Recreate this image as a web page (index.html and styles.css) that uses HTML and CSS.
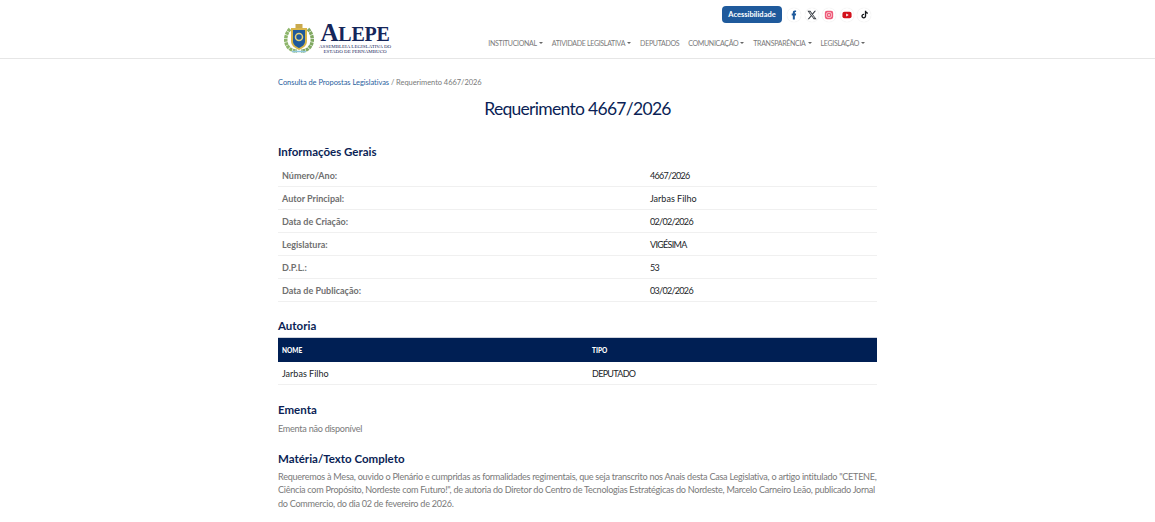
FILE: index.html
```html
<!DOCTYPE html>
<html lang="pt-BR">
<head>
    <meta charset="UTF-8">
    <title>Requerimento 4667/2026</title>
    <link rel="stylesheet" href="styles.css">
</head>
<body>
    <header class="site-header">
        <div class="container header-inner">
            <a class="logo" href="#">
                <svg class="crest" width="30" height="30" viewBox="0 0 30 30">
                    <path d="M6 6C1 11 0 20 5 25c2 2 5 3 8 3" fill="none" stroke="#8db56a" stroke-width="3.500" stroke-dasharray="3 .6"/>
                    <path d="M24 6c5 5 6 14 1 19-2 2-5 3-8 3" fill="none" stroke="#7fa860" stroke-width="3.500" stroke-dasharray="3 .6"/>
                    <path d="M8 28.500h14" stroke="#8fc7dc" stroke-width="1.5"/>
                    <rect x="11.500" y="1" width="7" height="4" fill="#c9a94e"/>
                    <path d="M7 5h16v13c0 5-4 7-8 9-4-2-8-4-8-9z" fill="#d8b64a"/>
                    <path d="M9 7h12v11c0 4-3 5.500-6 7-3-1.500-6-3-6-7z" fill="#1f5a9c"/>
                    <circle cx="15" cy="14" r="3.500" fill="none" stroke="#e6d27a" stroke-width="1.500"/>
                </svg>
                <span class="logo-text">
                    <span class="logo-name"><span class="logo-cap">A</span>LEPE</span>
                    <span class="logo-sub">ASSEMBLEIA LEGISLATIVA DO<br>ESTADO DE PERNAMBUCO</span>
                </span>
            </a>
            <div class="header-right">
                <div class="top-row">
                    <a class="btn-access" href="#">Acessibilidade</a>
                    <div class="social">
                        <a href="#"><svg width="10" height="10" viewBox="0 0 24 24"><path fill="#1f5a9c" d="M14 8.500V6.200c0-1 .5-1.400 1.500-1.400H17V1h-3c-3.200 0-4.800 2-4.800 4.800v2.700H6.500V13h2.700v10H14V13h2.600l.5-4.500z"/></svg></a>
                        <a href="#"><svg width="10" height="10" viewBox="0 0 24 24"><path fill="#33383f" d="M18.200 2h3.400l-7.400 8.500L23 22h-6.800l-5.300-7-6.100 7H1.400l7.900-9.100L1 2h7l4.800 6.400zm-1.200 18h1.900L7 3.900H5z"/></svg></a>
                        <a href="#"><svg width="10" height="10" viewBox="0 0 24 24"><rect x="2" y="2" width="20" height="20" rx="5" fill="#ee5a78"/><rect x="6" y="6" width="12" height="12" rx="4" fill="none" stroke="#fbd3da" stroke-width="2"/><circle cx="12" cy="12" r="2.500" fill="#fbd3da"/></svg></a>
                        <a href="#"><svg width="10" height="10" viewBox="0 0 24 24"><rect x="1" y="4" width="22" height="16" rx="5" fill="#d3121c"/><path fill="#fff" d="M10 8.500v7l6-3.500z"/></svg></a>
                        <a href="#"><svg width="9" height="9" viewBox="0 0 24 24"><path fill="#16181c" d="M13 2h3.500c.3 2.600 1.800 4.200 4.500 4.500V10c-1.700 0-3.200-.5-4.500-1.400V16c0 3.800-2.900 6.500-6.500 6.500S3.500 19.800 3.500 16.200c0-3.800 3.200-6.800 7.500-6.400v3.700c-2.200-.4-3.900.9-3.900 2.700 0 1.600 1.300 2.800 2.900 2.800S13 17.800 13 16z"/></svg></a>
                    </div>
                </div>
                <nav class="main-nav">
                    <a class="caret" href="#">INSTITUCIONAL</a>
                    <a class="caret" href="#">ATIVIDADE LEGISLATIVA</a>
                    <a href="#">DEPUTADOS</a>
                    <a class="caret" href="#">COMUNICAÇÃO</a>
                    <a class="caret" href="#">TRANSPARÊNCIA</a>
                    <a class="caret" href="#">LEGISLAÇÃO</a>
                </nav>
            </div>
        </div>
    </header>

    <main class="container">
        <div class="breadcrumb"><a href="#">Consulta de Propostas Legislativas</a> / Requerimento 4667/2026</div>
        <h1>Requerimento 4667/2026</h1>

        <h2 class="first">Informações Gerais</h2>
        <table class="info-table">
            <tr><th>Número/Ano:</th><td class="tight">4667/2026</td></tr>
            <tr><th>Autor Principal:</th><td>Jarbas Filho</td></tr>
            <tr><th>Data de Criação:</th><td class="tight">02/02/2026</td></tr>
            <tr><th>Legislatura:</th><td class="tight">VIGÉSIMA</td></tr>
            <tr><th>D.P.L.:</th><td class="tight">53</td></tr>
            <tr><th>Data de Publicação:</th><td class="tight">03/02/2026</td></tr>
        </table>

        <h2>Autoria</h2>
        <table class="author-table">
            <thead><tr><th>NOME</th><th>TIPO</th></tr></thead>
            <tbody><tr><td>Jarbas Filho</td><td class="tight">DEPUTADO</td></tr></tbody>
        </table>

        <h2>Ementa</h2>
        <p class="ementa">Ementa não disponível</p>

        <h2>Matéria/Texto Completo</h2>
        <p>Requeremos à Mesa, ouvido o Plenário e cumpridas as formalidades regimentais, que seja transcrito nos Anais desta Casa Legislativa, o artigo intitulado "CETENE, Ciência com Propósito, Nordeste com Futuro!", de autoria do Diretor do Centro de Tecnologias Estratégicas do Nordeste, Marcelo Carneiro Leão, publicado Jornal do Commercio, do dia 02 de fevereiro de 2026.</p>
    </main>
</body>
</html>
```

FILE: styles.css
```css
body {
    margin: 0;
    font-family: Lato, sans-serif;
    font-size: 9px;
    color: #212529;
    background-color: #fff;
    overflow: hidden;
}

a {
    text-decoration: none;
    color: inherit;
}

.container {
    width: 599px;
    margin: 0 auto;
}

/* Cabecalho */
.site-header {
    height: 58px;
    border-bottom: 1px solid #e6e6e6;
}

.header-inner {
    display: flex;
    justify-content: space-between;
    height: 58px;
}

.logo {
    display: flex;
    align-items: flex-start;
    gap: 5px;
    padding: 23px 0 0 6px;
}

.logo-text {
    display: flex;
    flex-direction: column;
    align-items: center;
    color: #15265a;
}

.logo-name {
    font-family: "Liberation Serif", serif;
    font-size: 20px;
    line-height: 20px;
    font-weight: 700;
    letter-spacing: -0.2px;
}

.logo-cap {
    font-size: 25px;
}

.logo-sub {
    font-family: "Liberation Serif", serif;
    font-size: 5px;
    line-height: 5px;
    text-align: center;
}

.header-right {
    display: flex;
    flex-direction: column;
    align-items: flex-end;
    padding-right: 12px;
}

.top-row {
    display: flex;
    align-items: center;
    margin: 6px -6px 0 0;
}

.btn-access {
    background-color: #1f5a9c;
    color: #fff;
    font-weight: 700;
    font-size: 7.500px;
    line-height: 17px;
    width: 60px;
    text-align: center;
    border-radius: 4px;
}

.social {
    display: flex;
    gap: 3.500px;
    margin-left: 5px;
}

.social a {
    display: flex;
    align-items: center;
    justify-content: center;
    width: 14px;
    height: 14px;
    border-radius: 50%;
    box-shadow: 0 0 1px rgba(0, 0, 0, 0.15);
}

.main-nav {
    display: flex;
    gap: 9px;
    margin-top: 16px;
    color: #7a7a7a;
    font-size: 7px;
    letter-spacing: -0.3px;
}

.caret::after {
    content: "";
    display: inline-block;
    margin-left: 2px;
    vertical-align: 2px;
    border-top: 2px solid #666;
    border-left: 2px solid transparent;
    border-right: 2px solid transparent;
}

/* Conteudo */
.breadcrumb {
    margin-top: 18px;
    font-size: 7.500px;
    line-height: 12px;
    letter-spacing: -0.05px;
    color: #7a7a7a;
}

.breadcrumb a {
    color: #2a62a0;
}

h1 {
    margin: 7px 0 0;
    text-align: center;
    font-size: 17.500px;
    line-height: 26px;
    font-weight: 400;
    letter-spacing: -0.7px;
    color: #0b1f56;
}

h2 {
    margin: 16px 0 3px;
    font-size: 11.500px;
    line-height: 15px;
    font-weight: 700;
    color: #0b1f56;
}

h2.first {
    margin: 22px 0 5px;
}

.author-table + h2 {
    margin-top: 17px;
}

p + h2 {
    margin-top: 15px;
}

table {
    width: 100%;
    border-collapse: collapse;
    table-layout: fixed;
}

th, td {
    padding: 0 4px;
    height: 22px;
    text-align: left;
    border-bottom: 1px solid #f0f0f0;
}

td.tight {
    letter-spacing: -0.7px;
}

.info-table th {
    width: 360px;
    font-weight: 700;
    color: #6f6f6f;
}

.author-table {
    margin-top: 4px;
}

.author-table th {
    background-color: #001f54;
    color: #fff;
    font-size: 6.500px;
    font-weight: 900;
    height: 24px;
    border-bottom: 0;
    border-top: 1px solid #cfd3dd;
}

.author-table th:first-child, .author-table td:first-child {
    width: 302px;
}

p {
    margin: 4px 0 0;
    color: #7a7a7a;
    line-height: 13.500px;
    font-size: 9.100px;
    letter-spacing: -0.27px;
}

p.ementa {
    margin-top: 5px;
}
```
